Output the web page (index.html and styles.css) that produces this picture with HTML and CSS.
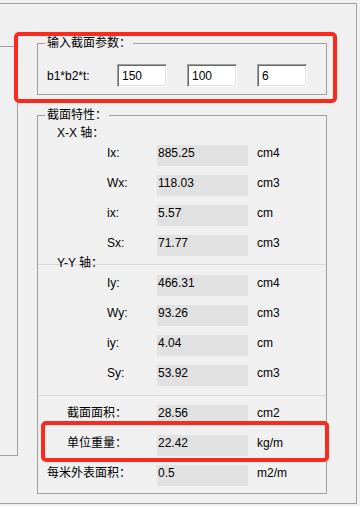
FILE: index.html
```html
<!DOCTYPE html>
<html lang="zh">
  <head>
    <meta charset="UTF-8" />
    <meta name="viewport" content="width=device-width, initial-scale=1.0" />
    <title>截面参数</title>
    <link rel="stylesheet" href="styles.css">
  </head>
  <body>
    <div class="frame">
      <div class="side"></div>
      <div class="main">
        <fieldset class="group input-group">
          <legend>输入截面参数：</legend>
          <div class="input-row">
            <span class="input-label">b1*b2*t:</span>
            <input class="num" value="150">
            <input class="num" value="100">
            <input class="num" value="6">
          </div>
        </fieldset>
        <fieldset class="group props">
          <legend>截面特性：</legend>
          <div class="axis">X-X 轴：</div>
          <div class="row"><span class="name sub">Ix:</span><span class="val">885.25</span><span class="unit">cm4</span></div>
          <div class="row"><span class="name sub">Wx:</span><span class="val">118.03</span><span class="unit">cm3</span></div>
          <div class="row"><span class="name sub">ix:</span><span class="val">5.57</span><span class="unit">cm</span></div>
          <div class="row"><span class="name sub">Sx:</span><span class="val">71.77</span><span class="unit">cm3</span></div>
          <div class="divider"></div>
          <div class="axis axis-y">Y-Y 轴：</div>
          <div class="row"><span class="name sub">Iy:</span><span class="val">466.31</span><span class="unit">cm4</span></div>
          <div class="row"><span class="name sub">Wy:</span><span class="val">93.26</span><span class="unit">cm3</span></div>
          <div class="row"><span class="name sub">iy:</span><span class="val">4.04</span><span class="unit">cm</span></div>
          <div class="row"><span class="name sub">Sy:</span><span class="val">53.92</span><span class="unit">cm3</span></div>
          <div class="divider divider-b"></div>
          <div class="row"><span class="name mid">截面面积：</span><span class="val">28.56</span><span class="unit">cm2</span></div>
          <div class="row"><span class="name mid">单位重量：</span><span class="val">22.42</span><span class="unit">kg/m</span></div>
          <div class="row"><span class="name">每米外表面积：</span><span class="val">0.5</span><span class="unit">m2/m</span></div>
        </fieldset>
      </div>
    </div>
    <div class="mark mark-input"></div>
    <div class="mark mark-weight"></div>
  </body>
</html>
```

FILE: styles.css
```css
* {
  font-family: "Liberation Sans", "Noto Sans CJK SC", sans-serif;
}
body {
  margin: 0;
  width: 360px;
  height: 506px;
  overflow: hidden;
  position: relative;
  background-color: #f0f0f0;
  font-size: 12px;
  color: #000;
}
.frame {
  box-sizing: border-box;
  margin: 3px 0 0 -10px;
  width: 367px;
  height: 501px;
  border: 1px solid #a0a0a0;
  display: flex;
  align-items: flex-start;
}
.side {
  box-sizing: border-box;
  width: 27px;
  height: 410px;
  margin-top: 42px;
  border: 1px solid #a0a0a0;
  border-left: none;
}
.main {
  margin-left: 19px;
  width: 290px;
  padding-top: 31px;
}
.group {
  margin: 0;
  padding: 0 9px;
  border: 1px solid #a0a0a0;
  min-width: 0;
}
.group legend {
  padding: 0 2px;
  margin-left: -2px;
  line-height: 16px;
}
.input-group {
  padding-top: 13px;
  padding-bottom: 7px;
}
.input-row {
  display: flex;
  align-items: center;
  height: 23px;
}
.input-label {
  flex-shrink: 0;
  width: 70px;
}
.num {
  flex-shrink: 0;
  box-sizing: border-box;
  width: 50px;
  height: 23px;
  margin: 0 20px 0 0;
  padding: 0 0 0 4px;
  border: 1px solid;
  border-color: #a0a0a0 #fff #fff #a0a0a0;
  box-shadow: inset 1px 1px #696969, inset -1px -1px #e3e3e3;
  background-color: #fff;
  font-size: 12px;
  color: #000;
  outline: none;
}
.num:last-child {
  margin-right: 0;
}
.props {
  margin-top: 12px;
  padding-top: 2px;
  padding-bottom: 7px;
}
.axis {
  line-height: 16px;
  padding-left: 10px;
}
.axis-y {
  margin-top: -10px;
}
.row {
  display: flex;
  height: 21px;
  margin-top: 9px;
  line-height: 14px;
}
.axis + .row {
  margin-top: 4px;
}
.name {
  flex-shrink: 0;
  box-sizing: border-box;
  width: 110px;
  padding-top: 1px;
}
.sub {
  padding-left: 60px;
}
.mid {
  padding-left: 20px;
}
.val {
  flex-shrink: 0;
  box-sizing: border-box;
  width: 91px;
  padding: 1px 0 0 1px;
  background-color: #e1e1e1;
}
.unit {
  margin-left: 9px;
  padding-top: 1px;
  white-space: nowrap;
}
.divider {
  height: 1px;
  margin: 8px -9px 0;
  background-color: #d9d9d9;
}
.divider-b {
  margin-top: 9px;
}
.mark {
  position: absolute;
  box-sizing: border-box;
  border: 4px solid #fa2a1e;
  border-radius: 5px;
}
.mark-input {
  left: 14px;
  top: 32px;
  width: 323px;
  height: 71px;
}
.mark-weight {
  left: 41px;
  top: 421px;
  width: 288px;
  height: 41px;
}
```
